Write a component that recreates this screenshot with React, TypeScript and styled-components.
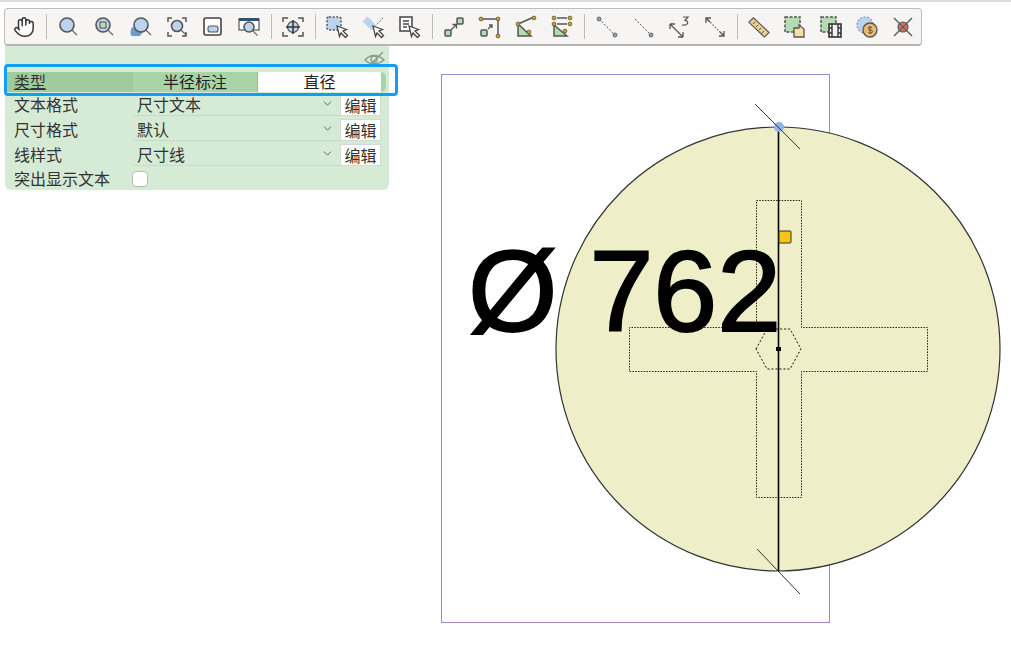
import React from "react";
import styled, { createGlobalStyle } from "styled-components";
import { Hand, ChevronDown } from "lucide-react";

const GlobalStyle = createGlobalStyle`
  html, body {
    margin: 0;
    background: #fff;
    font-family: "Liberation Sans", "Noto Sans CJK SC", sans-serif;
  }
`;

const Page = styled("div")`
  position: relative;
  width: 1011px;
  height: 649px;
  overflow: hidden;
`;

const TopLine = styled("div")`
  height: 2px;
  background: #dcdcdc;
`;

const Toolbar = styled("div")`
  display: flex;
  align-items: center;
  box-sizing: border-box;
  width: 918px;
  height: 38px;
  margin: 6px 0 0 4px;
  padding-left: 1px;
  background: #f6f5f4;
  border: 1px solid #bdbdbd;
  border-bottom: 2px solid #b4b4b4;
  border-radius: 4px;
`;

const Tool = styled("div")`
  flex: 0 0 36px;
  height: 32px;
  display: flex;
  align-items: center;
  justify-content: center;
  color: #333;
`;

const Sep = styled("div")`
  flex: 0 0 1px;
  height: 25px;
  margin: 0 3.5px 0 4px;
  background: #bcbcbc;
`;

const Workspace = styled("div")`
  display: flex;
  align-items: flex-start;
`;

const Panel = styled("div")`
  flex: 0 0 384px;
  box-sizing: border-box;
  height: 144px;
  margin-left: 5px;
  padding: 26px 3px 0 0;
  background: #d6ebd6;
  border-radius: 0 0 6px 6px;
  font-family: "Noto Sans CJK SC", sans-serif;
  font-size: 16px;
  color: #333;
`;

const EyeSlot = styled("div")`
  position: absolute;
  left: 363px;
  top: 50px;
`;

const TypeRow = styled("div")`
  display: grid;
  grid-template-columns: 128px 124px 124px;
  height: 20px;
  line-height: 18px;
  background: #a9d4a8;
  border-radius: 0 5px 5px 0;
`;

const TypeLabel = styled("div")`
  padding-left: 9px;
  background: #9fcb9f;
  text-decoration: underline;
`;

const TypeValue = styled("div")<{ $active?: boolean }>`
  text-align: center;
  color: #222;
  background: ${(p) => (p.$active ? "#fff" : "transparent")};
  border-left: ${(p) => (p.$active ? "1px solid #8fc08f" : "0")};
`;

const Row = styled("div")`
  display: grid;
  grid-template-columns: 128px 207px 41px;
  align-items: center;
  height: 25px;
`;

const Label = styled("div")`
  padding: 0 0 1px 9px;
  white-space: nowrap;
  line-height: 22px;
`;

const Select = styled("div")`
  display: flex;
  align-items: center;
  justify-content: space-between;
  box-sizing: border-box;
  height: 22px;
  padding: 0 6px 1px 4px;
  border-bottom: 1px solid #c3dcc3;
  line-height: 20px;
  color: #333;
`;

const EditButton = styled("div")`
  box-sizing: border-box;
  width: 41px;
  height: 22px;
  line-height: 20px;
  text-align: center;
  background: #fff;
  border: 1px solid #cfdccf;
  font-size: 16px;
  color: #333;
`;

const CheckRow = styled("div")`
  display: grid;
  grid-template-columns: 127px 1fr;
  align-items: center;
  height: 20px;
`;

const CheckBox = styled("div")`
  width: 14px;
  height: 14px;
  background: #fff;
  border: 1px solid #b9b9b9;
  border-radius: 4px;
`;

const Highlight = styled("div")`
  position: absolute;
  left: 4px;
  top: 64px;
  box-sizing: border-box;
  width: 394px;
  height: 32px;
  border: 3px solid #0f9ff5;
  border-radius: 4px;
  pointer-events: none;
`;

const Drawing = styled("svg")`
  flex: 0 0 622px;
  display: block;
`;

const DIM = "#555";
const BLUE = "#b9d4ec";
const GREEN = "#b3dcb0";
const GOLD = "#c9a63a";

const Icon: React.FC<{ children: React.ReactNode }> = ({ children }) => (
  <svg width="24" height="24" viewBox="0 0 24 24" fill="none" stroke={DIM} strokeWidth="1.5">
    {children}
  </svg>
);

const Lens: React.FC<{ cx?: number; cy?: number; r?: number }> = ({ cx = 10, cy = 10, r = 7 }) => (
  <>
    <circle cx={cx} cy={cy} r={r} fill={BLUE} strokeWidth="1.6" />
    <path d={`M${cx + r * 0.72} ${cy + r * 0.72}l5 5`} strokeWidth="1.1" />
  </>
);

const Arrow: React.FC<{ x: number; y: number }> = ({ x, y }) => (
  <path
    d={`M${x} ${y}l9.5 3.5-3.5 1.5 4.5 4.5-2 2-4.5-4.5-1.5 3.5z`}
    fill="#fff"
    stroke="#444"
    strokeWidth="1.3"
  />
);

const Dot: React.FC<{ x: number; y: number }> = ({ x, y }) => (
  <circle cx={x} cy={y} r="1.9" fill={GOLD} stroke="#5f5223" strokeWidth="0.8" />
);

const DimLine: React.FC = () => (
  <>
    <path d="M5 5l14 14" strokeDasharray="1.6 1.6" strokeWidth="1.1" />
    <path d="M3 8l0-5 5 0M3 3l4 4M21 16l0 5-5 0M21 21l-4-4" strokeWidth="1.3" />
  </>
);

const tools: React.ReactNode[][] = [
  [<Hand key="hand" size={22} strokeWidth={1.6} fill="#fff" />],
  [
    <Icon key="z1"><Lens /></Icon>,
    <Icon key="z2">
      <Lens />
      <rect x="7" y="7" width="6" height="6" fill={GREEN} strokeWidth="1" />
    </Icon>,
    <Icon key="z3">
      <path d="M3 12c-2 4-2 8 0 9h8l3-4z" fill="#6f9cc4" stroke="none" />
      <Lens cx={12} cy={10} r={7} />
    </Icon>,
    <Icon key="z4">
      <path d="M3 7V3h4M17 3h4v4M3 17v4h4M21 17v4h-4" />
      <Lens cx={12} cy={11} r={5.5} />
    </Icon>,
    <Icon key="z5">
      <rect x="3" y="3" width="17" height="17" rx="2" fill="#fff" stroke="#444" strokeWidth="1.6" />
      <rect x="7" y="11" width="10" height="6" rx="2" fill={BLUE} strokeWidth="1.1" />
    </Icon>,
    <Icon key="z6">
      <rect x="2" y="4" width="20" height="11" fill="#fff" strokeWidth="1.2" />
      <rect x="2" y="3" width="20" height="3" fill="#35506e" stroke="none" />
      <Lens cx={12} cy={12} r={5} />
    </Icon>,
  ],
  [
    <Icon key="pan">
      <path d="M2 7V3h5M17 3h5v4M2 17v4h5M22 17v4h-5" />
      <circle cx="12" cy="12" r="5.5" fill={BLUE} strokeWidth="1.3" />
      <path d="M12 5v14M5 12h14" stroke="#333" strokeWidth="1.5" />
    </Icon>,
  ],
  [
    <Icon key="s1">
      <rect x="1" y="2" width="14" height="13" rx="2" fill={BLUE} strokeDasharray="2 1.6" />
      <Arrow x={11} y={11} />
    </Icon>,
    <Icon key="s2">
      <path d="M3 4l9 9" stroke={BLUE} strokeWidth="7" />
      <path d="M21 3l-7 7" strokeDasharray="1.6 1.6" strokeWidth="1" />
      <Arrow x={11} y={11} />
    </Icon>,
    <Icon key="s3">
      <path d="M2 2h12v14H2zM5 6h6M5 9h6M5 12h4" fill="#fff" stroke="#444" strokeWidth="1.5" />
      <Arrow x={11} y={11} />
    </Icon>,
  ],
  [
    <Icon key="d1">
      <rect x="3" y="15" width="6" height="6" rx="1" fill={GREEN} />
      <rect x="15" y="3" width="6" height="6" rx="1" fill={GREEN} />
      <path d="M9 15l5-5M10.5 9.5h4v4" strokeWidth="1.3" />
    </Icon>,
    <Icon key="d2">
      <path d="M3 4h17v17" />
      <Dot x={3} y={4} />
      <Dot x={20} y={4} />
      <Dot x={20} y={21} />
      <rect x="3" y="15" width="6" height="6" rx="1" fill={GREEN} />
      <path d="M10 14l4-4M11 10h3v3" strokeWidth="1.3" />
    </Icon>,
    <Icon key="d3">
      <path d="M4 9v12h13L4 9z" fill={GREEN} />
      <path d="M4 9l16-7" />
      <Dot x={4} y={9} />
      <Dot x={20} y={3} />
      <Dot x={15} y={17} />
    </Icon>,
    <Icon key="d4">
      <path d="M7 3h10M7 9h10" strokeWidth="1.4" />
      <path d="M4 10v11h13L4 10z" fill={GREEN} />
      <Dot x={4} y={3} />
      <Dot x={20} y={3} />
      <Dot x={4} y={9} />
      <Dot x={20} y={9} />
      <Dot x={15} y={16} />
    </Icon>,
  ],
  [
    <Icon key="l1">
      <path d="M4 4l16 16" strokeDasharray="2 1.6" strokeWidth="1" />
      <circle cx="4" cy="4" r="2" fill="#7ba4cc" strokeWidth="0.8" />
      <circle cx="20" cy="20" r="2" fill="#7ba4cc" strokeWidth="0.8" />
    </Icon>,
    <Icon key="l2">
      <path d="M4 4l16 16" strokeDasharray="2 1.6" strokeWidth="1" />
      <circle cx="20" cy="20" r="2" fill="#7ba4cc" strokeWidth="0.8" />
    </Icon>,
    <Icon key="l3">
      <path d="M3 9l13 13M3 9l0 5M3 9l5 0M16 22l-5 0M16 22l0-5" strokeWidth="1.3" />
      <path d="M16 2h5l-3 3.5c4 0 4 5.5-3 4.5" strokeWidth="1.2" />
    </Icon>,
    <Icon key="l4"><DimLine /></Icon>,
  ],
  [
    <Icon key="r1">
      <path d="M6 2l17 16-5 5L1 7z" fill="#e8cf8c" strokeWidth="1.2" transform="scale(.92) translate(1 1)" />
      <path d="M8 7l-2 2M11 10l-2 2M14 13l-2 2M17 16l-2 2" strokeWidth="1" />
    </Icon>,
    <Icon key="r2">
      <rect x="2" y="2" width="15" height="15" fill={GREEN} strokeDasharray="3 1.5" />
      <path d="M11 13h5v-3l5 4v8H11z" fill="#f3dfa8" strokeWidth="1.3" />
    </Icon>,
    <Icon key="r3">
      <rect x="2" y="2" width="15" height="15" fill={GREEN} strokeDasharray="3 1.5" />
      <rect x="10" y="9" width="12" height="13" fill="#f3f3f3" stroke="#333" strokeWidth="1.6" />
      <path d="M13 9v13M19 9v13M10 13h3M19 13h3M10 18h3M19 18h3" stroke="#333" strokeWidth="1.4" />
    </Icon>,
    <Icon key="r4">
      <circle cx="10" cy="10" r="8" fill={BLUE} stroke="#8ba8c4" strokeDasharray="2 1.6" />
      <circle cx="15" cy="15" r="7" fill="#e9b96e" strokeWidth="1.3" />
      <path d="M17 12.5c-2-1.2-4.2 0-3.5 1.5s4 .7 4 2.5-2.5 2-4 1M15 11v8" strokeWidth="1" />
    </Icon>,
    <Icon key="r5">
      <path d="M3 3l18 18M21 3L3 21" strokeWidth="1.3" />
      <circle cx="12" cy="12" r="5" fill="#c9705c" strokeWidth="1.1" />
      <path d="M9 9l6 6M15 9l-6 6" strokeWidth="1" />
    </Icon>,
  ],
];

const rows = [
  { label: "文本格式", value: "尺寸文本" },
  { label: "尺寸格式", value: "默认" },
  { label: "线样式", value: "尺寸线" },
];

const App: React.FC = () => {
  return (
    <Page>
      <GlobalStyle />
      <TopLine />
      <Toolbar>
        {tools.map((group, i) => (
          <React.Fragment key={i}>
            {i > 0 && <Sep />}
            {group.map((icon, j) => (
              <Tool key={j}>{icon}</Tool>
            ))}
          </React.Fragment>
        ))}
      </Toolbar>
      <Workspace>
        <Panel>
          <TypeRow>
            <TypeLabel>类型</TypeLabel>
            <TypeValue>半径标注</TypeValue>
            <TypeValue $active>直径</TypeValue>
          </TypeRow>
          {rows.map((row) => (
            <Row key={row.label}>
              <Label>{row.label}</Label>
              <Select>
                {row.value}
                <ChevronDown size={13} strokeWidth={1.5} color="#444" />
              </Select>
              <EditButton>编辑</EditButton>
            </Row>
          ))}
          <CheckRow>
            <Label>突出显示文本</Label>
            <CheckBox />
          </CheckRow>
        </Panel>
        <Drawing width="622" height="603" viewBox="389 46 622 603">
          <rect x="441.5" y="74.5" width="388" height="548" fill="none" stroke="#a984cc" />
          <circle cx="778" cy="349" r="222" fill="#eeeec8" stroke="#333" strokeWidth="1.2" />
          <path
            d="M756.5 200.5h45v127h126v44h-126v126h-45v-126h-127v-44h127z"
            fill="none"
            stroke="#222"
            strokeDasharray="1.5 1.3"
          />
          <path
            d="M756 349l11-20h23l11 20-11 20h-23z"
            fill="#eeeec8"
            stroke="#111"
            strokeDasharray="2 2"
          />
          <text
            x="468"
            y="331"
            fontFamily="Liberation Sans, sans-serif"
            fontSize="115"
            fill="#000"
            stroke="#000"
            strokeWidth="2"
          >
            Ø 762
          </text>
          <path d="M778.5 127v444" stroke="#000" strokeWidth="1.6" />
          <path d="M757 549l43 45" stroke="#333" strokeWidth="1" />
          <circle cx="779" cy="127" r="5" fill="#8fb4ea" />
          <path d="M755 104l45 45" stroke="#333" strokeWidth="1" />
          <rect x="779" y="231" width="12" height="12" rx="1" fill="#f5c518" stroke="#333" />
          <rect x="776" y="347" width="5" height="4" fill="#000" />
        </Drawing>
      </Workspace>
      <EyeSlot>
        <svg width="24" height="18" viewBox="0 0 24 18" fill="none" stroke="#8b9a8b" strokeWidth="1.4">
          <path d="M2 10c5-6 13-6 19 0-6 5-14 5-19 0z" />
          <circle cx="11" cy="9" r="3" />
          <path d="M5 17L20 2" />
        </svg>
      </EyeSlot>
      <Highlight />
    </Page>
  );
};

export default App;
